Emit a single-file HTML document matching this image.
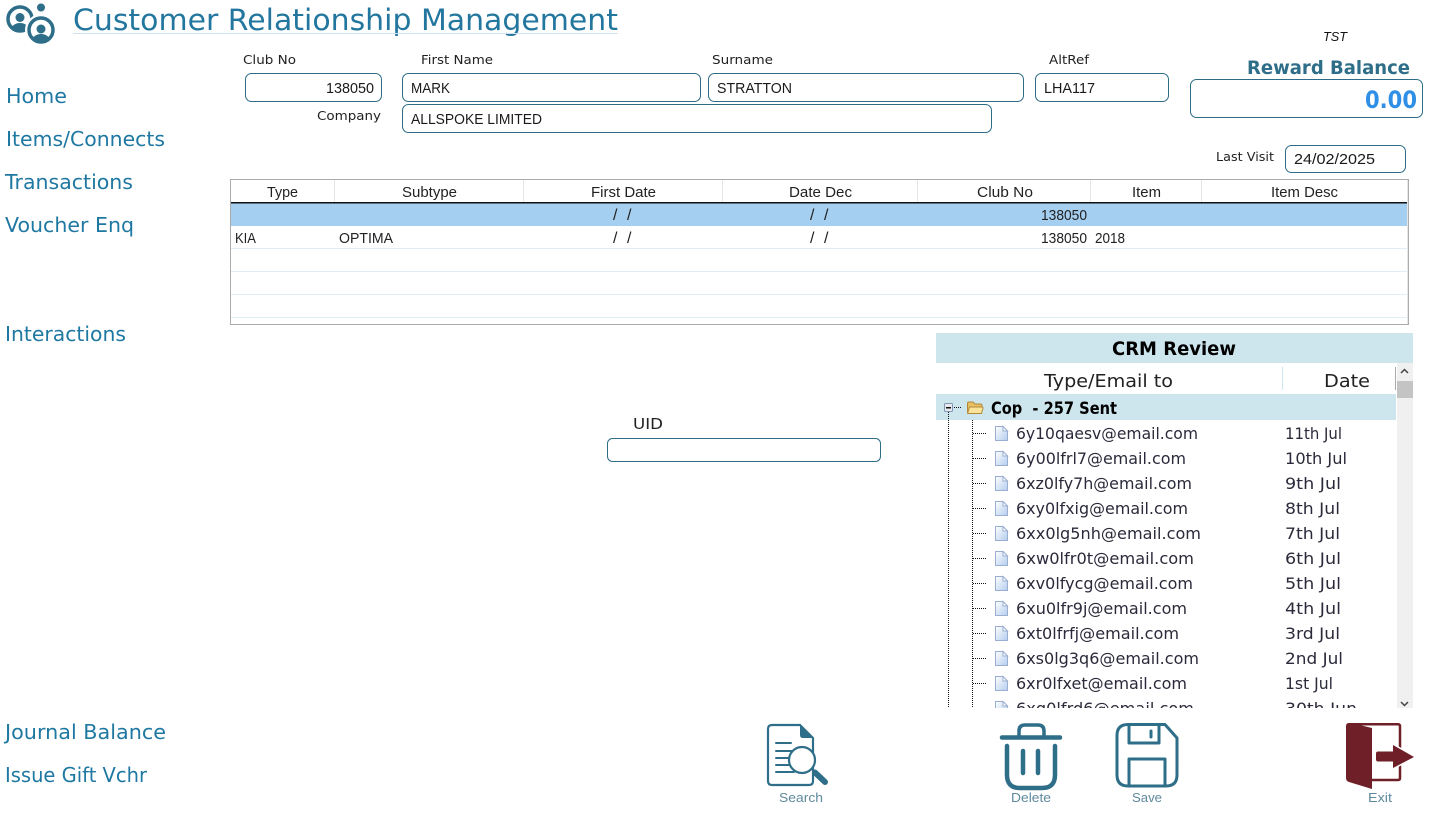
<!DOCTYPE html>
<html><head><meta charset="utf-8"><title>Customer Relationship Management</title>
<style>
html,body{margin:0;padding:0;background:#fff;width:1434px;height:818px;overflow:hidden}
svg{display:block}
.m{font-family:"DejaVu Sans",sans-serif}
.l{font-family:"Liberation Sans",sans-serif}
.nav{font-size:20px;fill:#1f78a2}
.lab{font-size:12.5px;fill:#222}
.inp{font-size:15px;fill:#1a1a1a}
.th{font-size:15px;fill:#222}
.td{font-size:15px;fill:#222}
.sl{font-size:16px;fill:#222}
.em{font-size:16px;fill:#2a2a3a}
.btn{font-size:13px;fill:#5f8a9e}
.box{fill:#fff;stroke:#2c6c86;stroke-width:1}
.ic{fill:none;stroke:#2e6e88;stroke-linecap:round;stroke-linejoin:round}
.dot{stroke:#111;stroke-width:1;stroke-dasharray:1 1;fill:none}
</style></head><body>
<svg width="1434" height="818" viewBox="0 0 1434 818" xmlns="http://www.w3.org/2000/svg">
<defs>
<clipPath id="tree"><rect x="936" y="363" width="477" height="345"/></clipPath>
<clipPath id="c1"><circle cx="20" cy="19" r="13"/></clipPath>
<clipPath id="c2"><circle cx="41" cy="30" r="13"/></clipPath>
<linearGradient id="dg" x1="0" y1="0" x2="1" y2="1"><stop offset="0" stop-color="#fff"/><stop offset="1" stop-color="#b4cdee"/></linearGradient>
<g id="doc">
<path d="M.5.5H8L12.5 5V14.5H.5Z" fill="url(#dg)" stroke="#9aaed2"/><path d="M8 .5V5H12.5Z" fill="#fff" stroke="#9aaed2"/>
</g>
</defs>

<!-- logo -->
<circle cx="20" cy="19" r="12" fill="none" stroke="#2e6e88" stroke-width="3.500"/>
<g clip-path="url(#c1)"><circle cx="20" cy="17.500" r="4.500" fill="#2e6e88"/><ellipse cx="20" cy="32" rx="10" ry="9" fill="#2e6e88"/></g>
<circle cx="41" cy="7.500" r="4" fill="#2e6e88"/>
<circle cx="41" cy="30" r="16" fill="#fff"/>
<circle cx="41" cy="30" r="12" fill="#fff" stroke="#2e6e88" stroke-width="3.500"/>
<g clip-path="url(#c2)"><circle cx="41" cy="29" r="4.500" fill="#2e6e88"/><ellipse cx="41" cy="43" rx="10" ry="9" fill="#2e6e88"/></g>

<!-- title -->
<text class="m" x="73" y="30" font-size="29" fill="#23779f" textLength="545" lengthAdjust="spacingAndGlyphs">Customer Relationship Management</text>
<rect x="73" y="33" width="545" height="1" fill="#cfe3f2"/>
<text class="l" x="1323" y="41" font-size="13" font-style="italic" fill="#111" textLength="24" lengthAdjust="spacingAndGlyphs">TST</text>

<!-- nav -->
<text class="m nav" x="6" y="103" textLength="61" lengthAdjust="spacingAndGlyphs">Home</text>
<text class="m nav" x="6" y="146" textLength="159" lengthAdjust="spacingAndGlyphs">Items/Connects</text>
<text class="m nav" x="5" y="189" textLength="128" lengthAdjust="spacingAndGlyphs">Transactions</text>
<text class="m nav" x="5" y="232" textLength="129" lengthAdjust="spacingAndGlyphs">Voucher Enq</text>
<text class="m nav" x="5" y="341" textLength="121" lengthAdjust="spacingAndGlyphs">Interactions</text>
<text class="m nav" x="5" y="739" textLength="161" lengthAdjust="spacingAndGlyphs">Journal Balance</text>
<text class="m nav" x="5" y="782" textLength="142" lengthAdjust="spacingAndGlyphs">Issue Gift Vchr</text>

<!-- labels -->
<text class="m lab" x="243" y="64" textLength="53" lengthAdjust="spacingAndGlyphs">Club No</text>
<text class="m lab" x="421" y="64" textLength="72" lengthAdjust="spacingAndGlyphs">First Name</text>
<text class="m lab" x="712" y="64" textLength="61" lengthAdjust="spacingAndGlyphs">Surname</text>
<text class="m lab" x="1049" y="64" textLength="40" lengthAdjust="spacingAndGlyphs">AltRef</text>
<text class="m lab" x="317" y="120" textLength="64" lengthAdjust="spacingAndGlyphs">Company</text>
<text class="m lab" x="1216" y="161" textLength="58" lengthAdjust="spacingAndGlyphs">Last Visit</text>

<!-- inputs -->
<rect class="box" x="245.500" y="73.500" width="136" height="28" rx="6"/>
<text class="l inp" x="326" y="93" textLength="48" lengthAdjust="spacingAndGlyphs">138050</text>
<rect class="box" x="402.500" y="73.500" width="298" height="28" rx="6"/>
<text class="l inp" x="411" y="93" textLength="39" lengthAdjust="spacingAndGlyphs">MARK</text>
<rect class="box" x="708.500" y="73.500" width="315" height="28" rx="6"/>
<text class="l inp" x="717" y="93" textLength="75" lengthAdjust="spacingAndGlyphs">STRATTON</text>
<rect class="box" x="1035.500" y="73.500" width="133" height="28" rx="6"/>
<text class="l inp" x="1044" y="93" textLength="51" lengthAdjust="spacingAndGlyphs">LHA117</text>
<rect class="box" x="402.500" y="104.500" width="589" height="28" rx="6"/>
<text class="l inp" x="411" y="124" textLength="131" lengthAdjust="spacingAndGlyphs">ALLSPOKE LIMITED</text>
<text class="m" x="1247" y="74" font-size="19" font-weight="bold" fill="#2e6e88" textLength="163" lengthAdjust="spacingAndGlyphs">Reward Balance</text>
<rect class="box" x="1190.500" y="79.500" width="232" height="38" rx="6"/>
<text class="m" x="1365" y="108" font-size="24" font-weight="bold" fill="#2f8fe6" textLength="52" lengthAdjust="spacingAndGlyphs">0.00</text>
<rect class="box" x="1285.500" y="145.500" width="120" height="27" rx="6"/>
<text class="l inp" x="1294" y="164" textLength="81" lengthAdjust="spacingAndGlyphs">24/02/2025</text>

<!-- grid -->
<rect x="230.500" y="179.500" width="1178" height="145" fill="#fff" stroke="#ababab"/>
<rect x="231" y="203" width="1176" height="23" fill="#a5cff0"/>
<rect x="231" y="202" width="1176" height="1.500" fill="#111"/>
<g fill="#e6e6e6">
<rect x="334" y="180" width="1" height="22"/><rect x="523" y="180" width="1" height="22"/><rect x="722" y="180" width="1" height="22"/><rect x="917" y="180" width="1" height="22"/><rect x="1090" y="180" width="1" height="22"/><rect x="1201" y="180" width="1" height="22"/><rect x="1407" y="180" width="1" height="144"/>
</g>
<g fill="#e0eef8">
<rect x="231" y="248" width="1176" height="1"/><rect x="231" y="271" width="1176" height="1"/><rect x="231" y="294" width="1176" height="1"/><rect x="231" y="317" width="1176" height="1"/>
</g>
<text class="l th" x="267" y="197" textLength="31" lengthAdjust="spacingAndGlyphs">Type</text>
<text class="l th" x="402" y="197" textLength="55" lengthAdjust="spacingAndGlyphs">Subtype</text>
<text class="l th" x="591" y="197" textLength="65" lengthAdjust="spacingAndGlyphs">First Date</text>
<text class="l th" x="789" y="197" textLength="63" lengthAdjust="spacingAndGlyphs">Date Dec</text>
<text class="l th" x="977" y="197" textLength="56" lengthAdjust="spacingAndGlyphs">Club No</text>
<text class="l th" x="1132" y="197" textLength="29" lengthAdjust="spacingAndGlyphs">Item</text>
<text class="l th" x="1271" y="197" textLength="67" lengthAdjust="spacingAndGlyphs">Item Desc</text>
<text class="l sl" x="613" y="220">/</text><text class="l sl" x="627" y="220">/</text>
<text class="l sl" x="810" y="220">/</text><text class="l sl" x="824" y="220">/</text>
<text class="l td" x="1041" y="220" textLength="46" lengthAdjust="spacingAndGlyphs">138050</text>
<text class="l td" x="235" y="243" textLength="21" lengthAdjust="spacingAndGlyphs">KIA</text>
<text class="l td" x="339" y="243" textLength="54" lengthAdjust="spacingAndGlyphs">OPTIMA</text>
<text class="l sl" x="613" y="243">/</text><text class="l sl" x="627" y="243">/</text>
<text class="l sl" x="810" y="243">/</text><text class="l sl" x="824" y="243">/</text>
<text class="l td" x="1041" y="243" textLength="46" lengthAdjust="spacingAndGlyphs">138050</text>
<text class="l td" x="1095" y="243" textLength="30" lengthAdjust="spacingAndGlyphs">2018</text>

<!-- UID -->
<text class="m" x="633" y="429" font-size="15" fill="#222" textLength="30" lengthAdjust="spacingAndGlyphs">UID</text>
<rect class="box" x="607.500" y="438.500" width="273" height="23" rx="5"/>

<!-- CRM review -->
<rect x="936" y="333" width="477" height="30" fill="#cde6ee"/>
<text class="m" x="1112" y="355" font-size="19" font-weight="bold" fill="#000" textLength="124" lengthAdjust="spacingAndGlyphs">CRM Review</text>
<text class="m" x="1044" y="387" font-size="18" fill="#222" textLength="129" lengthAdjust="spacingAndGlyphs">Type/Email to</text>
<text class="m" x="1324" y="387" font-size="18" fill="#222" textLength="46" lengthAdjust="spacingAndGlyphs">Date</text>
<rect x="1282" y="367" width="1" height="23" fill="#cde6ee"/>
<rect x="1395" y="367" width="1" height="23" fill="#aaa"/>
<rect x="1397" y="363" width="16" height="345" fill="#f0f0f0"/>
<rect x="1397" y="381" width="16" height="17" fill="#c4c4c4"/>
<path d="M1401 373l3.500-3.500 3.500 3.500" fill="none" stroke="#444" stroke-width="1.500"/>
<path d="M1401 702l3.500 3.500 3.500-3.500" fill="none" stroke="#444" stroke-width="1.500"/>
<rect x="936" y="394" width="460" height="26" fill="#cde6ee"/>

<g clip-path="url(#tree)">
<path class="dot" d="M948.500 412V708M972.500 420V708M954 407.500H961"/>
<rect x="944.500" y="403.500" width="8" height="8" rx="1" fill="#e6e9ee" stroke="#8296b4"/><rect x="946" y="407" width="5" height="1.500" fill="#111"/>
<path d="M967.500 412V403.500q0-1.500 1.500-1.500h4l2 2h5.500q1.500 0 1.500 1.500V407" fill="#e8bf62" stroke="#b08a3a"/>
<path d="M967.500 413.500L969.500 407h12.500q1.300 0 1 1.300l-1.500 5.200Z" fill="#fbe39a" stroke="#b08a3a"/>
<text class="m" x="991" y="414" font-size="17" font-weight="bold" fill="#000" textLength="126" lengthAdjust="spacingAndGlyphs" xml:space="preserve">Cop  - 257 Sent</text>

<g id="rows">
<path class="dot" d="M973 433.500H987M973 458.500H987M973 483.500H987M973 508.500H987M973 533.500H987M973 558.500H987M973 583.500H987M973 608.500H987M973 633.500H987M973 658.500H987M973 683.500H987M973 708.500H987"/>
<use href="#doc" x="995" y="426"/><use href="#doc" x="995" y="451"/><use href="#doc" x="995" y="476"/><use href="#doc" x="995" y="501"/><use href="#doc" x="995" y="526"/><use href="#doc" x="995" y="551"/><use href="#doc" x="995" y="576"/><use href="#doc" x="995" y="601"/><use href="#doc" x="995" y="626"/><use href="#doc" x="995" y="651"/><use href="#doc" x="995" y="676"/><use href="#doc" x="995" y="701"/>
<text class="m em" x="1016" y="439" textLength="182" lengthAdjust="spacingAndGlyphs">6y10qaesv@email.com</text><text class="m em" x="1285" y="439" textLength="57" lengthAdjust="spacingAndGlyphs">11th Jul</text>
<text class="m em" x="1016" y="464" textLength="170" lengthAdjust="spacingAndGlyphs">6y00lfrl7@email.com</text><text class="m em" x="1285" y="464" textLength="62" lengthAdjust="spacingAndGlyphs">10th Jul</text>
<text class="m em" x="1016" y="489" textLength="176" lengthAdjust="spacingAndGlyphs">6xz0lfy7h@email.com</text><text class="m em" x="1285" y="489" textLength="56" lengthAdjust="spacingAndGlyphs">9th Jul</text>
<text class="m em" x="1016" y="514" textLength="172" lengthAdjust="spacingAndGlyphs">6xy0lfxig@email.com</text><text class="m em" x="1285" y="514" textLength="55" lengthAdjust="spacingAndGlyphs">8th Jul</text>
<text class="m em" x="1016" y="539" textLength="185" lengthAdjust="spacingAndGlyphs">6xx0lg5nh@email.com</text><text class="m em" x="1285" y="539" textLength="55" lengthAdjust="spacingAndGlyphs">7th Jul</text>
<text class="m em" x="1016" y="564" textLength="178" lengthAdjust="spacingAndGlyphs">6xw0lfr0t@email.com</text><text class="m em" x="1285" y="564" textLength="56" lengthAdjust="spacingAndGlyphs">6th Jul</text>
<text class="m em" x="1016" y="589" textLength="177" lengthAdjust="spacingAndGlyphs">6xv0lfycg@email.com</text><text class="m em" x="1285" y="589" textLength="56" lengthAdjust="spacingAndGlyphs">5th Jul</text>
<text class="m em" x="1016" y="614" textLength="171" lengthAdjust="spacingAndGlyphs">6xu0lfr9j@email.com</text><text class="m em" x="1285" y="614" textLength="56" lengthAdjust="spacingAndGlyphs">4th Jul</text>
<text class="m em" x="1016" y="639" textLength="163" lengthAdjust="spacingAndGlyphs">6xt0lfrfj@email.com</text><text class="m em" x="1285" y="639" textLength="55" lengthAdjust="spacingAndGlyphs">3rd Jul</text>
<text class="m em" x="1016" y="664" textLength="183" lengthAdjust="spacingAndGlyphs">6xs0lg3q6@email.com</text><text class="m em" x="1285" y="664" textLength="58" lengthAdjust="spacingAndGlyphs">2nd Jul</text>
<text class="m em" x="1016" y="689" textLength="171" lengthAdjust="spacingAndGlyphs">6xr0lfxet@email.com</text><text class="m em" x="1285" y="689" textLength="48" lengthAdjust="spacingAndGlyphs">1st Jul</text>
<text class="m em" x="1016" y="714" textLength="178" lengthAdjust="spacingAndGlyphs">6xq0lfrd6@email.com</text><text class="m em" x="1285" y="714" textLength="72" lengthAdjust="spacingAndGlyphs">30th Jun</text>
</g>
</g>

<!-- search icon -->
<path class="ic" stroke-width="2.200" d="M772 725H800L813 738V781q0 4-4 4H772q-4 0-4-4V729q0-4 4-4Z"/>
<path d="M800 724L814 738H803q-3 0-3-3Z" fill="#2e6e88"/>
<path class="ic" stroke-width="2" d="M776 743H791M776 751H792M776 758H789M776 765H789M776 772H794"/>
<circle cx="802" cy="760" r="13" fill="#fff" stroke="#2e6e88" stroke-width="2.200"/>
<path class="ic" stroke-width="6" d="M815 772.500L825 782"/>
<text class="l btn" x="779" y="802" textLength="44" lengthAdjust="spacingAndGlyphs">Search</text>

<!-- trash -->
<path class="ic" stroke-width="4.500" d="M1002 737.500H1060"/>
<path class="ic" stroke-width="3.500" d="M1019 736V731q0-6 6-6H1038q6 0 6 6V736"/>
<path class="ic" stroke-width="4.500" d="M1007 746V775q0 13 13 13H1042q13 0 13-13V746M1023 751V773M1038 751V773"/>
<text class="l btn" x="1011" y="802" textLength="40" lengthAdjust="spacingAndGlyphs">Delete</text>

<!-- save -->
<path class="ic" stroke-width="3" d="M1165 724.500H1128q-11 0-11 11V775q0 11 11 11H1166q11 0 11-11V738Z"/>
<path class="ic" stroke-width="3" d="M1129 724.500V743H1159V724.500M1129 786V759H1165V786"/>
<path class="ic" stroke-width="3" d="M1151 731V737"/>
<text class="l btn" x="1132" y="802" textLength="30" lengthAdjust="spacingAndGlyphs">Save</text>

<!-- exit -->
<path d="M1350 724.300H1398q2 0 2 2V778q0 2-2 2H1372M1400 726V750M1400 763V778" fill="none" stroke="#6e1f27" stroke-width="2.500"/>
<path d="M1349 723H1351L1372 728V789L1349 782Q1346 781 1346 778V726Q1346 723 1349 723Z" fill="#6e1f27"/>
<path d="M1378 751.500H1393V745L1414 757L1393 768V761.500H1378Q1376 761.500 1376 759.500V753.500Q1376 751.500 1378 751.500Z" fill="#fff" stroke="#fff" stroke-width="3"/>
<path d="M1378 751.500H1393V745L1414 757L1393 768V761.500H1378Q1376 761.500 1376 759.500V753.500Q1376 751.500 1378 751.500Z" fill="#6e1f27"/>
<text class="l btn" x="1368" y="802" textLength="24" lengthAdjust="spacingAndGlyphs">Exit</text>
</svg>
</body></html>
